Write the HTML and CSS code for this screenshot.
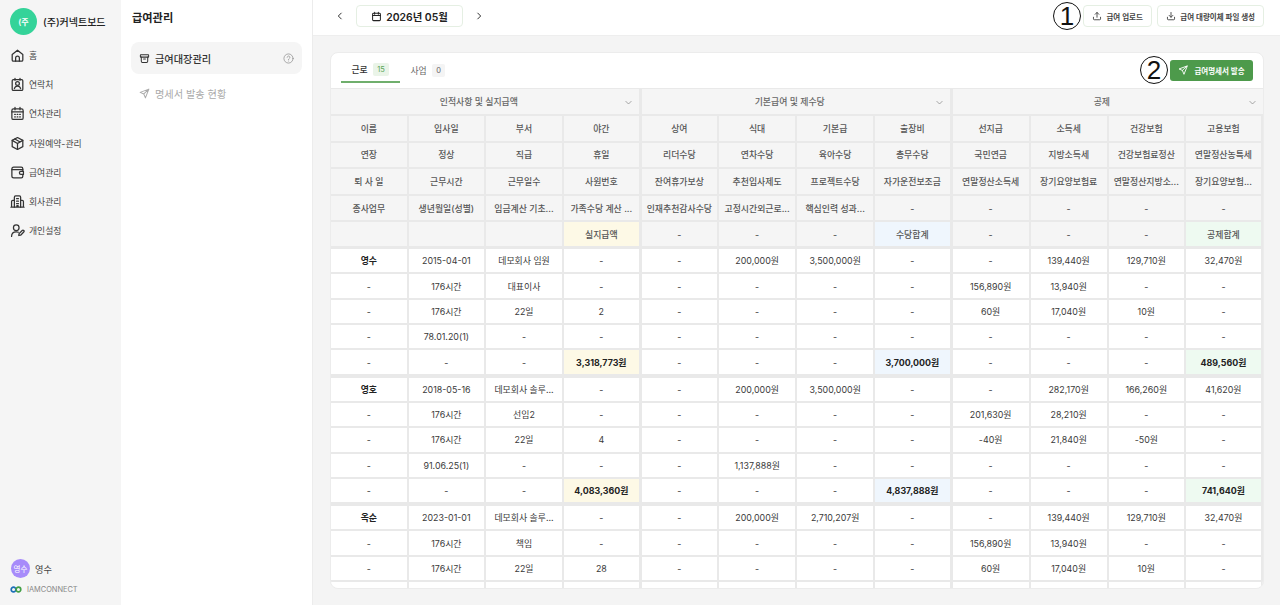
FILE: index.html
```html
<!DOCTYPE html>
<html lang="ko">
<head>
    <meta charset="UTF-8">
    <meta name="viewport" content="width=device-width, initial-scale=1.0">
    <title>급여관리</title>
    <link rel="stylesheet" href="styles.css">
</head>
<body>
    <aside class="sidebar">
        <div class="brand">
            <span class="brand-avatar">(주</span>
            <span class="brand-name">(주)커넥트보드</span>
        </div>
        <nav class="nav">
            <a class="nav-item"><svg class="icon" viewBox="0 0 24 24"><path d="M3.5 10.5 12 3.5l8.5 7V19a2 2 0 0 1-2 2h-13a2 2 0 0 1-2-2z"/><path d="M9 21v-5a3 3 0 0 1 6 0v5"/></svg>홈</a>
            <a class="nav-item"><svg class="icon" viewBox="0 0 24 24"><rect x="3.5" y="4" width="17" height="17.5" rx="2"/><path d="M8 2v3M16 2v3"/><circle cx="12" cy="10.5" r="3"/><path d="M7 18.5c.7-2.6 2.6-4 5-4s4.300 1.400 5 4"/></svg>연락처</a>
            <a class="nav-item"><svg class="icon" viewBox="0 0 24 24"><rect x="3" y="4.500" width="18" height="17" rx="2.500"/><path d="M8 2v4M16 2v4M3 9.500h18M7.500 13.500h1M11.500 13.500h1M15.500 13.500h1M7.500 17.500h1M11.500 17.500h1M15.500 17.500h1"/></svg>연차관리</a>
            <a class="nav-item"><svg class="icon" viewBox="0 0 24 24"><path d="M12 2.500 20.500 7v10L12 21.500 3.500 17V7z"/><path d="M3.500 7 12 12l8.500-5M12 12v9.500M7.700 4.800l8.500 4.800"/></svg>자원예약-관리</a>
            <a class="nav-item"><svg class="icon" viewBox="0 0 24 24"><path d="M20.500 9V6a2.500 2.500 0 0 0-2.500-2.500H6A3 3 0 0 0 3 6.500v11A3 3 0 0 0 6 20.500h12a2.500 2.500 0 0 0 2.500-2.500v-2"/><path d="M3 7.500h17.500M21.500 10h-4a2.500 2.500 0 0 0 0 5h4z"/></svg>급여관리</a>
            <a class="nav-item"><svg class="icon" viewBox="0 0 24 24"><path d="M7 21V5a2 2 0 0 1 2-2h6a2 2 0 0 1 2 2v16"/><path d="M17 10h2.500a2 2 0 0 1 2 2v9M7 10H4.500a2 2 0 0 0-2 2v9M1.500 21h21M10.500 7.500h3M10.500 11.500h3M10.500 15.500h3M11 21v-2.500h2V21"/></svg>회사관리</a>
            <a class="nav-item"><svg class="icon" viewBox="0 0 24 24"><circle cx="10" cy="7.500" r="4.500"/><path d="M2.500 21.500c0-4.500 3-7.500 7.500-7.500 1.300 0 2.400.2 3.400.7"/><path d="m14 20 .5-3 5-5a1.700 1.700 0 0 1 2.500 2.500l-5 5z"/></svg>개인설정</a>
        </nav>
        <div class="user">
            <span class="user-avatar">영수</span>
            <span class="user-name">영수</span>
        </div>
        <div class="company-logo">
            <svg class="logo-mark" viewBox="0 0 22 12"><circle cx="6.500" cy="6" r="4.300" class="ring-blue"/><circle cx="15.500" cy="6" r="4.300" class="ring-green"/></svg>
            <span>IAMCONNECT</span>
        </div>
    </aside>

    <aside class="submenu">
        <h1 class="submenu-title">급여관리</h1>
        <a class="submenu-item active">
            <svg class="icon small" viewBox="0 0 24 24"><rect x="3" y="4" width="18" height="5" rx="1"/><path d="M5 9v9a2.500 2.500 0 0 0 2.500 2.500h9A2.500 2.500 0 0 0 19 18V9M10 13h4"/></svg>
            <span>급여대장관리</span>
            <svg class="icon help" viewBox="0 0 24 24"><circle cx="12" cy="12" r="10"/><path d="M9 9.500a3 3 0 1 1 4.500 2.600c-1 .6-1.500 1.200-1.500 2.400M12 17.500v.1"/></svg>
        </a>
        <a class="submenu-item">
            <svg class="icon small" viewBox="0 0 24 24"><path d="M21.500 2.500 2.500 9.500l8 3.500 3.500 8.500zM21.500 2.500 10.500 13"/></svg>
            <span>명세서 발송 현황</span>
        </a>
    </aside>

    <main class="main">
        <header class="topbar">
            <svg class="icon chevron" viewBox="0 0 24 24"><path d="m15 5-7 7 7 7"/></svg>
            <div class="month-box">
                <svg class="icon small" viewBox="0 0 24 24"><rect x="3.500" y="5" width="17" height="16" rx="2"/><path d="M8 2.500V7M16 2.500V7M3.500 10h17"/></svg>
                2026년 05월
            </div>
            <svg class="icon chevron" viewBox="0 0 24 24"><path d="m9 5 7 7-7 7"/></svg>
            <div class="topbar-actions">
                <span class="marker marker-one">1</span>
                <button class="ghost-btn"><svg class="icon tiny" viewBox="0 0 24 24"><path d="M12 15V3.500M7.500 8 12 3.500 16.500 8M3.500 15v4a2 2 0 0 0 2 2h13a2 2 0 0 0 2-2v-4"/></svg>급여 업로드</button>
                <button class="ghost-btn"><svg class="icon tiny" viewBox="0 0 24 24"><path d="M12 3.500V15M7.500 10.500 12 15l4.500-4.500M3.500 15v4a2 2 0 0 0 2 2h13a2 2 0 0 0 2-2v-4"/></svg>급여 대량이체 파일 생성</button>
            </div>
        </header>

        <section class="content">
            <div class="card">
                <div class="card-head">
                    <div class="tabs">
                        <a class="tab active">근로 <span class="badge green">15</span></a>
                        <a class="tab">사업 <span class="badge">0</span></a>
                    </div>
                    <span class="marker marker-two">2</span>
                    <button class="send-btn"><svg class="icon tiny" viewBox="0 0 24 24"><path d="M21.500 2.500 2.500 9.500l8 3.500 3.500 8.500zM21.500 2.500 10.500 13"/></svg>급여명세서 발송</button>
                </div>

                <div class="sheet">
                    <div class="group-row">
                        <div class="group">인적사항 및 실지급액<svg class="icon caret" viewBox="0 0 24 24"><path d="m5 9 7 7 7-7"/></svg></div>
                        <div class="group">기본급여 및 제수당<svg class="icon caret" viewBox="0 0 24 24"><path d="m5 9 7 7 7-7"/></svg></div>
                        <div class="group">공제<svg class="icon caret" viewBox="0 0 24 24"><path d="m5 9 7 7 7-7"/></svg></div>
                    </div>

                    <div class="row head">
                        <div class="strong">이름</div><div>입사일</div><div>부서</div><div>야간</div>
                        <div>상여</div><div>식대</div><div>기본급</div><div>출장비</div>
                        <div>선지급</div><div>소득세</div><div>건강보험</div><div>고용보험</div>
                    </div>
                    <div class="row head">
                        <div>연장</div><div>정상</div><div>직급</div><div>휴일</div>
                        <div>리더수당</div><div>연차수당</div><div>육아수당</div><div>총무수당</div>
                        <div>국민연금</div><div>지방소득세</div><div>건강보험료정산</div><div>연말정산농특세</div>
                    </div>
                    <div class="row head">
                        <div>퇴 사 일</div><div>근무시간</div><div>근무일수</div><div>사원번호</div>
                        <div>잔여휴가보상</div><div>추천입사제도</div><div>프로젝트수당</div><div>자가운전보조금</div>
                        <div>연말정산소득세</div><div>장기요양보험료</div><div>연말정산지방소...</div><div>장기요양보험...</div>
                    </div>
                    <div class="row head">
                        <div>종사업무</div><div>생년월일(성별)</div><div>임금계산 기초...</div><div>가족수당 계산 ...</div>
                        <div>인재추천감사수당</div><div>고정시간외근로...</div><div>핵심인력 성과...</div><div>-</div>
                        <div>-</div><div>-</div><div>-</div><div>-</div>
                    </div>
                    <div class="row head last">
                        <div></div><div></div><div></div><div class="tint-yellow">실지급액</div>
                        <div>-</div><div>-</div><div>-</div><div class="tint-blue">수당합계</div>
                        <div>-</div><div>-</div><div>-</div><div class="tint-green">공제합계</div>
                    </div>

                    <div class="row">
                        <div class="strong">영수</div><div>2015-04-01</div><div>데모회사 임원</div><div>-</div>
                        <div>-</div><div>200,000원</div><div>3,500,000원</div><div>-</div>
                        <div>-</div><div>139,440원</div><div>129,710원</div><div>32,470원</div>
                    </div>
                    <div class="row">
                        <div>-</div><div>176시간</div><div>대표이사</div><div>-</div>
                        <div>-</div><div>-</div><div>-</div><div>-</div>
                        <div>156,890원</div><div>13,940원</div><div>-</div><div>-</div>
                    </div>
                    <div class="row">
                        <div>-</div><div>176시간</div><div>22일</div><div>2</div>
                        <div>-</div><div>-</div><div>-</div><div>-</div>
                        <div>60원</div><div>17,040원</div><div>10원</div><div>-</div>
                    </div>
                    <div class="row">
                        <div>-</div><div>78.01.20(1)</div><div>-</div><div>-</div>
                        <div>-</div><div>-</div><div>-</div><div>-</div>
                        <div>-</div><div>-</div><div>-</div><div>-</div>
                    </div>
                    <div class="row last">
                        <div>-</div><div>-</div><div>-</div><div class="tint-yellow strong">3,318,773원</div>
                        <div>-</div><div>-</div><div>-</div><div class="tint-blue strong">3,700,000원</div>
                        <div>-</div><div>-</div><div>-</div><div class="tint-green strong">489,560원</div>
                    </div>

                    <div class="row">
                        <div class="strong">영호</div><div>2018-05-16</div><div>데모회사 솔루...</div><div>-</div>
                        <div>-</div><div>200,000원</div><div>3,500,000원</div><div>-</div>
                        <div>-</div><div>282,170원</div><div>166,260원</div><div>41,620원</div>
                    </div>
                    <div class="row">
                        <div>-</div><div>176시간</div><div>선임2</div><div>-</div>
                        <div>-</div><div>-</div><div>-</div><div>-</div>
                        <div>201,630원</div><div>28,210원</div><div>-</div><div>-</div>
                    </div>
                    <div class="row">
                        <div>-</div><div>176시간</div><div>22일</div><div>4</div>
                        <div>-</div><div>-</div><div>-</div><div>-</div>
                        <div>-40원</div><div>21,840원</div><div>-50원</div><div>-</div>
                    </div>
                    <div class="row">
                        <div>-</div><div>91.06.25(1)</div><div>-</div><div>-</div>
                        <div>-</div><div>1,137,888원</div><div>-</div><div>-</div>
                        <div>-</div><div>-</div><div>-</div><div>-</div>
                    </div>
                    <div class="row last">
                        <div>-</div><div>-</div><div>-</div><div class="tint-yellow strong">4,083,360원</div>
                        <div>-</div><div>-</div><div>-</div><div class="tint-blue strong">4,837,888원</div>
                        <div>-</div><div>-</div><div>-</div><div class="tint-green strong">741,640원</div>
                    </div>

                    <div class="row">
                        <div class="strong">옥순</div><div>2023-01-01</div><div>데모회사 솔루...</div><div>-</div>
                        <div>-</div><div>200,000원</div><div>2,710,207원</div><div>-</div>
                        <div>-</div><div>139,440원</div><div>129,710원</div><div>32,470원</div>
                    </div>
                    <div class="row">
                        <div>-</div><div>176시간</div><div>책임</div><div>-</div>
                        <div>-</div><div>-</div><div>-</div><div>-</div>
                        <div>156,890원</div><div>13,940원</div><div>-</div><div>-</div>
                    </div>
                    <div class="row">
                        <div>-</div><div>176시간</div><div>22일</div><div>28</div>
                        <div>-</div><div>-</div><div>-</div><div>-</div>
                        <div>60원</div><div>17,040원</div><div>10원</div><div>-</div>
                    </div>
                    <div class="row">
                        <div></div><div></div><div></div><div></div>
                        <div></div><div></div><div></div><div></div>
                        <div></div><div></div><div></div><div></div>
                    </div>
                </div>
            </div>
        </section>
    </main>
</body>
</html>
```

FILE: styles.css
```css
* {
    margin: 0;
    padding: 0;
    box-sizing: border-box;
}

body {
    font-family: Inter, 'Noto Sans CJK KR', sans-serif;
    background: #f4f4f4;
    color: #333;
    height: 605px;
    display: flex;
    overflow: hidden;
}

.icon {
    fill: none;
    stroke: currentColor;
    stroke-width: 2;
    stroke-linecap: round;
    stroke-linejoin: round;
    width: 15px;
    height: 15px;
    flex-shrink: 0;
}

.icon.small {
    width: 11px;
    height: 11px;
    stroke-width: 2.200;
}

.icon.tiny {
    width: 10px;
    height: 10px;
    stroke-width: 2.200;
}

/* left sidebar */
.sidebar {
    width: 121px;
    flex-shrink: 0;
    background: #f5f5f5;
    display: flex;
    flex-direction: column;
    padding: 8px 0 11px 10px;
}

.brand {
    display: flex;
    align-items: center;
    gap: 6px;
    height: 27px;
}

.brand-avatar {
    width: 27px;
    height: 27px;
    border-radius: 50%;
    background: #34d399;
    color: white;
    font-size: 8px;
    font-weight: 600;
    display: flex;
    align-items: center;
    justify-content: center;
}

.brand-name {
    font-size: 10px;
    font-weight: 500;
    color: #222;
    white-space: nowrap;
}

.nav {
    display: flex;
    flex-direction: column;
    margin-top: 5.500px;
}

.nav-item {
    display: flex;
    align-items: center;
    gap: 4px;
    height: 29.300px;
    font-size: 8.800px;
    color: #444;
    white-space: nowrap;
}

.nav-item .icon {
    color: #333;
}

.user {
    margin-top: auto;
    display: flex;
    align-items: center;
    gap: 5px;
    margin-left: 1px;
}

.user-avatar {
    width: 19px;
    height: 19px;
    border-radius: 50%;
    background: #a78bfa;
    color: white;
    font-size: 7.500px;
    display: flex;
    align-items: center;
    justify-content: center;
}

.user-name {
    font-size: 9.200px;
    color: #444;
}

.company-logo {
    display: flex;
    align-items: center;
    gap: 5px;
    margin-top: 7px;
    font-size: 7.400px;
    color: #888;
}

.logo-mark {
    width: 12px;
    height: 7px;
    fill: none;
    stroke-width: 3;
}

.ring-blue {
    stroke: #1d6fb8;
}

.ring-green {
    stroke: #43a047;
}

/* second menu */
.submenu {
    width: 192px;
    flex-shrink: 0;
    background: white;
    border-right: 1px solid #ececec;
    padding: 10px 10px 0 10px;
}

.submenu-title {
    font-size: 11.200px;
    font-weight: 700;
    color: #222;
    line-height: 14px;
    margin: 1px 0 17px 1px;
}

.submenu-item {
    display: flex;
    align-items: center;
    gap: 5px;
    height: 32px;
    padding: 0 8px;
    border-radius: 8px;
    font-size: 10.200px;
    color: #aaa;
    margin-bottom: 3px;
}

.submenu-item.active {
    background: #f5f5f5;
    color: #333;
    font-weight: 500;
}

.submenu-item .help {
    width: 11px;
    height: 11px;
    margin-left: auto;
    color: #888;
    stroke-width: 1.500;
}

/* main area */
.main {
    flex: 1;
    min-width: 0;
    display: flex;
    flex-direction: column;
}

.topbar {
    height: 36px;
    flex-shrink: 0;
    background: white;
    border-bottom: 1px solid #eeeeee;
    display: flex;
    align-items: center;
    padding: 0 16px 3px 22px;
}

.chevron {
    width: 10px;
    height: 10px;
    stroke-width: 2.400;
    color: #333;
}

.month-box {
    width: 107px;
    height: 22px;
    margin: 0 11px 0 11px;
    border: 1px solid #e5efe3;
    border-radius: 4px;
    display: flex;
    align-items: center;
    justify-content: center;
    gap: 4px;
    font-size: 10.400px;
    font-weight: 600;
    color: #222;
}

.topbar-actions {
    margin-left: auto;
    display: flex;
    gap: 5px;
    align-items: center;
    position: relative;
}

.ghost-btn {
    height: 22px;
    padding: 0 8px;
    background: white;
    border: 1px solid #e5efe3;
    border-radius: 4px;
    display: flex;
    align-items: center;
    gap: 4.500px;
    font-family: inherit;
    font-size: 7.500px;
    font-weight: 600;
    color: #444;
}

.marker {
    width: 28px;
    height: 28px;
    border: 1px solid #111;
    border-radius: 50%;
    background: white;
    font-family: 'Liberation Sans', sans-serif;
    font-size: 26px;
    line-height: 26px;
    text-align: center;
    color: #111;
    position: absolute;
}

.marker-one {
    left: -30px;
    top: -3px;
}

.marker-two {
    right: 95px;
    top: 3px;
}

.content {
    flex: 1;
    min-height: 0;
    padding: 16px 16px 16px 17px;
}

.card {
    height: 537px;
    background: white;
    border: 1px solid #ececec;
    border-radius: 8px;
    overflow: hidden;
}

.card-head {
    height: 35px;
    display: flex;
    align-items: flex-start;
    justify-content: space-between;
    padding-left: 9.500px;
    padding-right: 10px;
    position: relative;
}

.tabs {
    display: flex;
    gap: 10.700px;
}

.tab {
    display: flex;
    align-items: center;
    gap: 5.500px;
    height: 30px;
    padding: 10px 11px 6px 11px;
    font-size: 8.800px;
    color: #666;
}

.tab:last-child {
    padding: 10px 0 6px 0;
}

.tab.active {
    font-weight: 500;
    color: #333;
    border-bottom: 2px solid #6fae6c;
}

.badge {
    background: #f4f4f4;
    border-radius: 2px;
    padding: 0 4px;
    height: 13px;
    line-height: 13px;
    font-size: 7.500px;
    font-weight: 400;
    color: #666;
}

.badge.green {
    background: #eaf4e8;
    color: #5aa557;
}

.send-btn {
    margin-top: 6.500px;
    width: 83px;
    height: 21.500px;
    background: #4d9a4b;
    border: none;
    border-radius: 3px;
    display: flex;
    align-items: center;
    justify-content: center;
    gap: 6px;
    font-family: inherit;
    font-size: 7.500px;
    font-weight: 600;
    color: white;
}

/* table */
.sheet {
    background: #e9e9e9;
    padding-right: 2px;
}

.row {
    display: grid;
    grid-template-columns: 77.700px 77.300px 78px 77.700px 77.300px 78.300px 77.700px 77.700px 78px 78px 77.300px 75px;
}

.row > div {
    height: 25.300px;
    background: white;
    border-right: 2px solid #e9e9e9;
    border-bottom: 2px solid #e9e9e9;
    display: flex;
    align-items: center;
    justify-content: center;
    font-size: 8.900px;
    color: #3a3a3a;
    white-space: nowrap;
    overflow: hidden;
}

.row > div:nth-child(4),
.row > div:nth-child(8) {
    border-right-width: 3px;
}

.row > div:last-child {
    border-right: none;
}

.row.last > div {
    height: 27.300px;
    border-bottom-width: 4px;
}

.row > .strong {
    font-weight: 700;
    color: #222;
}

.row.head > div {
    height: 26.600px;
    background: #f5f5f5;
    color: #555;
    font-weight: 500;
}

.row.head.last > div {
    height: 26.800px;
    border-bottom-width: 3px;
}

.row > div.tint-yellow,
.row.head > div.tint-yellow {
    background: #fdf9e6;
}

.row > div.tint-blue,
.row.head > div.tint-blue {
    background: #eff6fd;
}

.row > div.tint-green,
.row.head > div.tint-green {
    background: #eefaf1;
}

.group-row {
    display: grid;
    grid-template-columns: 310.700px 311px 310.300px;
    padding-top: 1px;
}

.group {
    height: 27px;
    background: #f5f5f5;
    border-right: 3px solid #e9e9e9;
    border-bottom: 2px solid #e9e9e9;
    display: flex;
    align-items: center;
    justify-content: center;
    padding-right: 12px;
    font-size: 8.900px;
    font-weight: 500;
    color: #666;
    position: relative;
}

.group:last-child {
    border-right: none;
}

.caret {
    width: 9px;
    height: 9px;
    color: #888;
    position: absolute;
    right: 6px;
    top: 9px;
}
```
